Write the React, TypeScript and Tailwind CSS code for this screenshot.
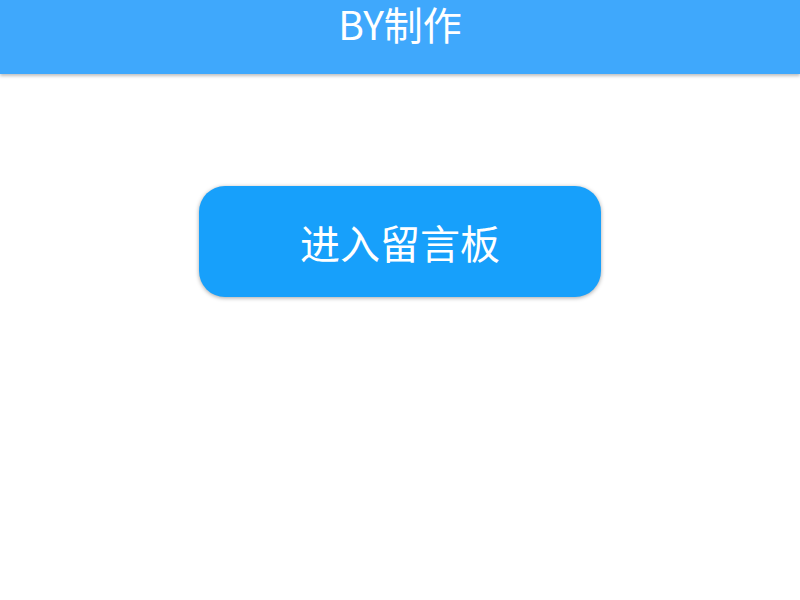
import React from 'react';

const App: React.FC = () => {
  return (
    <div className="min-h-screen bg-white font-['Noto_Sans_CJK_SC','Noto_Sans',sans-serif]">
      {/* Header */}
      <header className="h-[74px] bg-[#3fa8fc] shadow-[0_2px_3px_rgba(0,0,0,0.25)] flex justify-center">
        <h1 className="text-white text-[39px] leading-none pt-[4px]">BY制作</h1>
      </header>

      {/* Entry button */}
      <div className="flex justify-center pt-[112px]">
        <button className="w-[402px] h-[111px] rounded-[26px] bg-[#17a0fb] text-white text-[40px] leading-none shadow-[0_1px_4px_rgba(0,0,0,0.35)] flex items-center justify-center">
          进入留言板
        </button>
      </div>
    </div>
  );
};

export default App;
